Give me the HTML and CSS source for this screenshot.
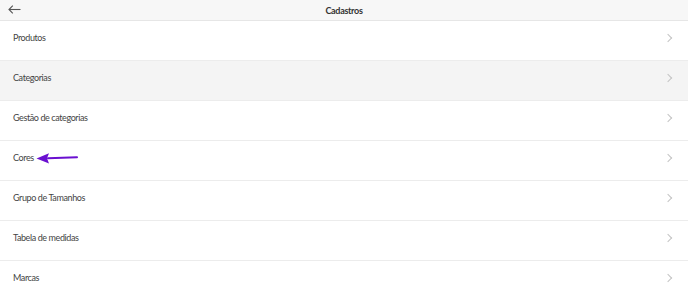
FILE: index.html
```html
<!DOCTYPE html>
<html lang="pt">
<head>
    <meta charset="UTF-8">
    <meta name="viewport" content="width=device-width, initial-scale=1.0">
    <title>Cadastros</title>
    <link rel="stylesheet" href="styles.css">
</head>
<body>
    <header class="topbar">
        <button class="back-btn" aria-label="Voltar">
            <svg width="13" height="9" viewBox="0 0 13 9" fill="none" stroke="#555" stroke-width="1.1">
                <path d="M12.5 4.5H1"/>
                <path d="M4.8 0.7L1 4.5l3.8 3.8"/>
            </svg>
        </button>
        <h1>Cadastros</h1>
    </header>

    <ul class="menu">
        <li class="menu-item">Produtos<span class="chevron"></span></li>
        <li class="menu-item hovered">Categorias<span class="chevron"></span></li>
        <li class="menu-item">Gestão de categorias<span class="chevron"></span></li>
        <li class="menu-item">
            <span class="label">Cores</span>
            <svg class="pointer" width="44" height="12" viewBox="0 0 44 12">
                <path d="M12 6.2L41 5.3" stroke="#6a10d0" stroke-width="2" stroke-linecap="round" fill="none"/>
                <path d="M0.5 6.5L13 1.2 11 6.3 13 11.5z" fill="#6a10d0"/>
            </svg>
            <span class="chevron"></span>
        </li>
        <li class="menu-item">Grupo de Tamanhos<span class="chevron"></span></li>
        <li class="menu-item">Tabela de medidas<span class="chevron"></span></li>
        <li class="menu-item">Marcas<span class="chevron"></span></li>
    </ul>
</body>
</html>
```

FILE: styles.css
```css
:root {
    --text: #444;
    --line: #ececec;
}

body {
    margin: 0;
    font-family: 'Lato', 'Liberation Sans', sans-serif;
    color: var(--text);
    background: #fff;
}

.topbar {
    height: 20px;
    background: #f7f7f7;
    border-bottom: 1px solid #e6e6e6;
    display: flex;
    align-items: center;
    justify-content: center;
    position: relative;
}

.back-btn {
    position: absolute;
    left: 8px;
    top: 5px;
    padding: 0;
    border: none;
    background: none;
    display: flex;
}

h1 {
    margin: 0;
    font-size: 9px;
    font-weight: 700;
    letter-spacing: -0.3px;
    color: #333;
}

.menu {
    list-style: none;
    margin: 0;
    padding: 0;
}

.menu-item {
    height: 33px;
    border-bottom: 1px solid var(--line);
    display: flex;
    align-items: center;
    padding: 0 17px 6px 13px;
    font-size: 9px;
    letter-spacing: -0.4px;
}

.menu-item.hovered {
    background: #f4f4f4;
}

.pointer {
    margin-left: 2px;
}

.chevron {
    margin-left: auto;
    margin-top: 1px;
    width: 5px;
    height: 5px;
    border-top: 1px solid #c4c4c4;
    border-right: 1px solid #c4c4c4;
    transform: rotate(45deg);
}
```
